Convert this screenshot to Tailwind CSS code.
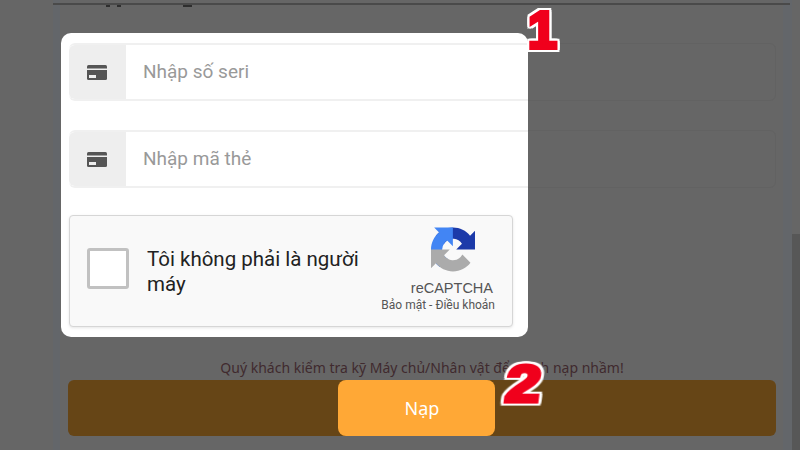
<!DOCTYPE html>
<html lang="vi">
<head>
    <meta charset="UTF-8" />
    <title>Nạp thẻ</title>
    <script src="https://cdn.jsdelivr.net/npm/@tailwindcss/browser@4"></script>
</head>
<body class="relative w-[800px] h-[450px] overflow-hidden bg-[#666666] font-['Roboto',sans-serif]">

<!-- Dimmed page -->
<div class="flex h-full pl-[53px]">
    <div class="relative w-[739px] h-full bg-[#666666] border-l-[7px] border-r-[9px] border-[#63666a]">
        <div class="absolute -left-[7px] -right-[7px] top-[3px] h-[2px] bg-[#4a4a4a]"></div>
        <!-- bits of the heading cut off by the top line -->
        <span class="absolute left-[46px] top-[5px] w-[4px] h-[2px] bg-[#2e2e2e]"></span>
        <span class="absolute left-[57px] top-[5px] w-[4px] h-[2px] bg-[#2e2e2e]"></span>
        <span class="absolute left-[123px] top-[5px] w-[9px] h-[2px] bg-[#2e2e2e]"></span>
        <main class="flex flex-col h-full pl-[8px] pr-[7px] pt-[43px]">
            <div class="h-[58px] shrink-0 rounded-[6px] border border-[#626262]"></div>
            <div class="h-[58px] shrink-0 mt-[29px] rounded-[6px] border border-[#626262]"></div>
            <p class="mt-[170px] text-center text-[14px] leading-[20px] text-[#402a2e] font-['Noto_Sans',sans-serif]">Quý khách kiểm tra kỹ Máy chủ/Nhân vật để tránh nạp nhầm!</p>
            <div class="mt-[2px] h-[56px] shrink-0 rounded-[6px] bg-[#664516]"></div>
        </main>
    </div>
    <div class="flex flex-col justify-end w-[8px]">
        <div class="h-[216px] bg-[#575757]"></div>
    </div>
</div>

<!-- Highlighted form -->
<section class="absolute left-[61px] top-[33px] w-[467px] h-[304px] rounded-[10px] bg-white pl-[8px] pt-[10px]">
    <div class="flex h-[58px] rounded-l-[6px] border-y-2 border-[#f0f0f0]">
        <div class="flex items-center justify-center w-[57px] pr-[1px] rounded-l-[6px] bg-[#eeeeee]">
            <svg width="20" height="15" viewBox="0 0 20 15"><rect width="20" height="15" rx="1.5" fill="#555"/><rect y="3.5" width="20" height="1.5" fill="#eee"/><rect x="2" y="10" width="7" height="3" fill="#eee"/></svg>
        </div>
        <div class="flex items-center pl-[17px] pt-[1px] text-[19px] text-[#999999]">Nhập số seri</div>
    </div>
    <div class="flex h-[58px] mt-[29px] rounded-l-[6px] border-y-2 border-[#f0f0f0]">
        <div class="flex items-center justify-center w-[57px] pr-[1px] rounded-l-[6px] bg-[#eeeeee]">
            <svg width="20" height="15" viewBox="0 0 20 15"><rect width="20" height="15" rx="1.5" fill="#555"/><rect y="3.5" width="20" height="1.5" fill="#eee"/><rect x="2" y="10" width="7" height="3" fill="#eee"/></svg>
        </div>
        <div class="flex items-center pl-[17px] text-[19px] text-[#999999]">Nhập mã thẻ</div>
    </div>

    <!-- captcha -->
    <div class="flex mt-[27px] w-[444px] h-[112px] rounded-[4px] border border-[#d6d6d6] bg-[#f9f9f9] shadow-[0_1px_3px_rgba(0,0,0,0.1)]">
        <div class="mt-[32px] ml-[17px] w-[42px] h-[41px] shrink-0 rounded-[3px] border-[3px] border-[#c1c1c1] bg-white"></div>
        <div class="ml-[18px] mt-[31px] w-[240px] text-[20.5px] leading-[25px] text-[#222222]">Tôi không phải là người máy</div>
        <div class="flex flex-col items-end ml-auto mr-[17px] mt-[11px]">
            <svg class="mr-[20px]" width="44" height="45" viewBox="0 0 64 64">
                <path fill="#1c3aa9" d="M64 31.955l-.033-1.37V4.687l-7.16 7.16C50.948 4.674 42.033.093 32.05.093 21.66.093 12.43 5.055 6.595 12.74l11.736 11.86a15.55 15.55 0 0 1 4.753-5.334c2.05-1.6 4.952-2.906 8.968-2.906.485 0 .86.057 1.135.163 4.976.393 9.288 3.14 11.828 7.124l-8.307 8.307c10.522-.04 22.4-.066 27.29.003"/>
                <path fill="#4285f4" d="M31.862.094l-1.37.033H4.594l7.16 7.16C4.58 13.147 0 22.06 0 32.046c0 10.387 4.962 19.617 12.647 25.452l11.86-11.736a15.55 15.55 0 0 1-5.334-4.753c-1.6-2.05-2.906-4.952-2.906-8.968 0-.485.057-.86.163-1.135.393-4.976 3.14-9.288 7.124-11.828l8.307 8.307c-.04-10.522-.066-22.4.003-27.29"/>
                <path fill="#ababab" d="M.001 32.045l.033 1.37v25.898l7.16-7.16c5.86 7.173 14.774 11.754 24.76 11.754 10.387 0 19.617-4.962 25.452-12.647l-11.736-11.86a15.55 15.55 0 0 1-4.753 5.334c-2.05 1.6-4.952 2.906-8.968 2.906-.485 0-.86-.057-1.135-.163-4.976-.393-9.288-3.14-11.828-7.124l8.307-8.307c-10.522.04-22.4.066-27.29-.003"/>
            </svg>
            <div class="mt-[7px] mr-[2px] text-[14.5px] leading-[18px] text-[#555555] font-['Liberation_Sans',sans-serif]">reCAPTCHA</div>
            <div class="text-[12px] leading-[16px] text-[#555555] whitespace-nowrap">Bảo mật - Điều khoản</div>
        </div>
    </div>
</section>

<!-- Submit button, above the bar -->
<button class="absolute left-[338px] top-[380px] w-[157px] h-[56px] pl-[11px] rounded-[8px] bg-[#ffa836] text-white text-[18px] font-['Noto_Sans',sans-serif]">Nạp</button>

<!-- Step numbers -->
<span class="absolute left-[528px] top-[0px] text-[52px] leading-[60px] font-bold text-[#f0001c] font-['Liberation_Sans',sans-serif] [-webkit-text-stroke:4px_#f0001c] [filter:drop-shadow(2px_0_0_white)_drop-shadow(-2px_0_0_white)_drop-shadow(0_2px_0_white)_drop-shadow(0_-2px_0_white)]">1</span>
<span class="absolute left-[509px] top-[354px] inline-block scale-x-[1.2] -skew-x-6 text-[52px] leading-[60px] font-bold text-[#f0001c] font-['Liberation_Sans',sans-serif] [-webkit-text-stroke:4px_#f0001c] [filter:drop-shadow(2px_0_0_white)_drop-shadow(-2px_0_0_white)_drop-shadow(0_2px_0_white)_drop-shadow(0_-2px_0_white)]">2</span>

</body>
</html>
